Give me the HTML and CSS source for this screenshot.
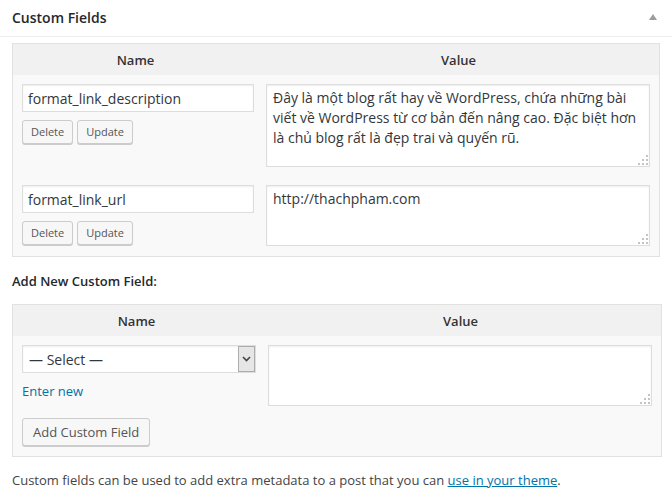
FILE: index.html
```html
<!DOCTYPE html>
<html lang="vi">

<head>
  <meta charset="UTF-8">
  <meta name="viewport" content="width=device-width, initial-scale=1.0">
  <title>Custom Fields</title>
  <link rel="stylesheet" href="styles.css">
</head>

<body>
  <div class="postbox">
    <div class="postbox-head">
      <h2 class="postbox-title">Custom Fields</h2>
      <svg class="toggle" width="8" height="6" viewBox="0 0 8 6"><polygon points="4,0 8,6 0,6" fill="#9c9c9c"/></svg>
    </div>

    <div class="postbox-inside">
      <!-- danh sách field đã có -->
      <table class="meta-table">
        <thead>
          <tr>
            <th class="col-name">Name</th>
            <th class="col-value">Value</th>
          </tr>
        </thead>
        <tbody>
          <tr>
            <td class="col-name">
              <input class="meta-key" type="text" value="format_link_description">
              <div class="meta-actions">
                <button class="button button-small">Delete</button>
                <button class="button button-small">Update</button>
              </div>
            </td>
            <td class="col-value">
              <div class="area-wrap">
                <textarea class="meta-value tall">Đây là một blog rất hay về WordPress, chứa những bài viết về WordPress từ cơ bản đến nâng cao. Đặc biệt hơn là chủ blog rất là đẹp trai và quyến rũ.</textarea>
                <span class="grip"></span>
              </div>
            </td>
          </tr>
          <tr>
            <td class="col-name">
              <input class="meta-key" type="text" value="format_link_url">
              <div class="meta-actions">
                <button class="button button-small">Delete</button>
                <button class="button button-small">Update</button>
              </div>
            </td>
            <td class="col-value">
              <div class="area-wrap">
                <textarea class="meta-value">http://thachpham.com</textarea>
                <span class="grip"></span>
              </div>
            </td>
          </tr>
        </tbody>
      </table>

      <p class="add-title">Add New Custom Field:</p>

      <table class="meta-table">
        <thead>
          <tr>
            <th class="col-name">Name</th>
            <th class="col-value">Value</th>
          </tr>
        </thead>
        <tbody>
          <tr>
            <td class="col-name">
              <div class="select-wrap">
                <select class="meta-select">
                  <option>— Select —</option>
                </select>
                <span class="select-arrow">
                  <svg width="9" height="6" viewBox="0 0 9 6"><polyline points="1,1 4.5,4.5 8,1" fill="none" stroke="#444" stroke-width="1.6"/></svg>
                </span>
              </div>
              <a class="enter-new" href="#">Enter new</a>
              <button class="button add-button">Add Custom Field</button>
            </td>
            <td class="col-value">
              <div class="area-wrap">
                <textarea class="meta-value"></textarea>
                <span class="grip"></span>
              </div>
            </td>
          </tr>
        </tbody>
      </table>

      <p class="note">Custom fields can be used to add extra metadata to a post that you can <a href="#">use in your theme</a>.</p>
    </div>
  </div>
</body>

</html>
```

FILE: styles.css
```css
* {
  box-sizing: border-box;
}

body {
  margin: 0;
  background: #fff;
  font-family: 'Open Sans', 'Noto Sans', sans-serif;
  font-size: 13px;
  color: #444;
}

a {
  color: #0073aa;
}

/* khung postbox */
.postbox-head {
  display: flex;
  align-items: center;
  justify-content: space-between;
  height: 37px;
  padding: 0 15px 0 12px;
  border-bottom: 1px solid #eee;
}

.postbox-title {
  margin: 0;
  font-size: 14px;
  font-weight: 600;
  line-height: 36px;
  color: #23282d;
}

.toggle {
  display: block;
  margin-top: -2px;
}

.postbox-inside {
  padding: 6px 12px 0;
}

/* bảng field */
.meta-table {
  width: 648px;
  border: 1px solid #e1e1e1;
  border-spacing: 0;
  background: #f9f9f9;
}

.meta-table th {
  height: 31px;
  padding: 0;
  background: #f1f1f1;
  font-weight: 600;
  color: #333;
  text-align: center;
}

.meta-table th.col-name {
  width: 245px;
}

.meta-table td {
  vertical-align: top;
}

.meta-table td.col-name {
  padding: 9px 4px 9px 9px;
}

.meta-table td.col-value {
  padding: 9px 9px 9px 8px;
}

/* hàng cuối cách viền dưới thêm 1px */
.meta-table tr:last-child td {
  padding-bottom: 10px;
}

.meta-key,
.meta-value,
.meta-select {
  display: block;
  border: 1px solid #ddd;
  box-shadow: inset 0 1px 2px rgba(0, 0, 0, 0.07);
  background: #fff;
  font-family: 'Open Sans', 'Noto Sans', sans-serif;
  font-size: 14px;
  color: #32373c;
  outline: none;
}

.meta-key {
  width: 232px;
  height: 28px;
  padding: 0 5px;
}

.meta-actions {
  display: flex;
  gap: 4px;
  margin-top: 8px;
}

.area-wrap {
  position: relative;
}

.meta-value {
  width: 384px;
  height: 61px;
  margin: 0;
  padding: 3px 6px;
  line-height: 20px;
  resize: none;
}

.meta-value.tall {
  height: 83px;
}

/* chấm kéo giãn góc phải dưới */
.grip {
  position: absolute;
  right: 2px;
  bottom: 2px;
  width: 11px;
  height: 11px;
}

.grip::before {
  content: "";
  position: absolute;
  right: 0;
  bottom: 0;
  width: 2px;
  height: 2px;
  background: #c4c4c4;
  box-shadow:
    -4px 0 #c4c4c4, -8px 0 #c4c4c4,
    0 -4px #c4c4c4, -4px -4px #c4c4c4,
    0 -8px #c4c4c4;
}

/* nút */
.button {
  display: inline-block;
  height: 28px;
  padding: 0 10px;
  border: 1px solid #ccc;
  border-radius: 3px;
  background: #f7f7f7;
  box-shadow: 0 1px 0 #ccc;
  font-family: 'Open Sans', 'Noto Sans', sans-serif;
  font-size: 13px;
  line-height: 26px;
  color: #555;
  cursor: pointer;
}

.button-small {
  height: 24px;
  padding: 0 8px;
  font-size: 11px;
  line-height: 22px;
}

/* select kiểu cũ */
.select-wrap {
  position: relative;
  width: 234px;
}

.meta-select {
  width: 234px;
  height: 28px;
  padding: 0 20px 0 6px;
  appearance: none;
  border-radius: 0;
}

.select-arrow {
  position: absolute;
  top: 1px;
  right: 1px;
  bottom: 1px;
  width: 17px;
  display: flex;
  align-items: center;
  justify-content: center;
  border: 1px solid #acacac;
  background: #e6e6e6;
  pointer-events: none;
}

.enter-new {
  display: block;
  margin-top: 8px;
  line-height: 20px;
  text-decoration: none;
}

.add-button {
  margin-top: 17px;
}

.add-title {
  margin: 14px 0 13px;
  font-weight: 600;
  line-height: 20px;
  color: #23282d;
}

.note {
  margin: 13px 0 0;
  line-height: 20px;
}
```
